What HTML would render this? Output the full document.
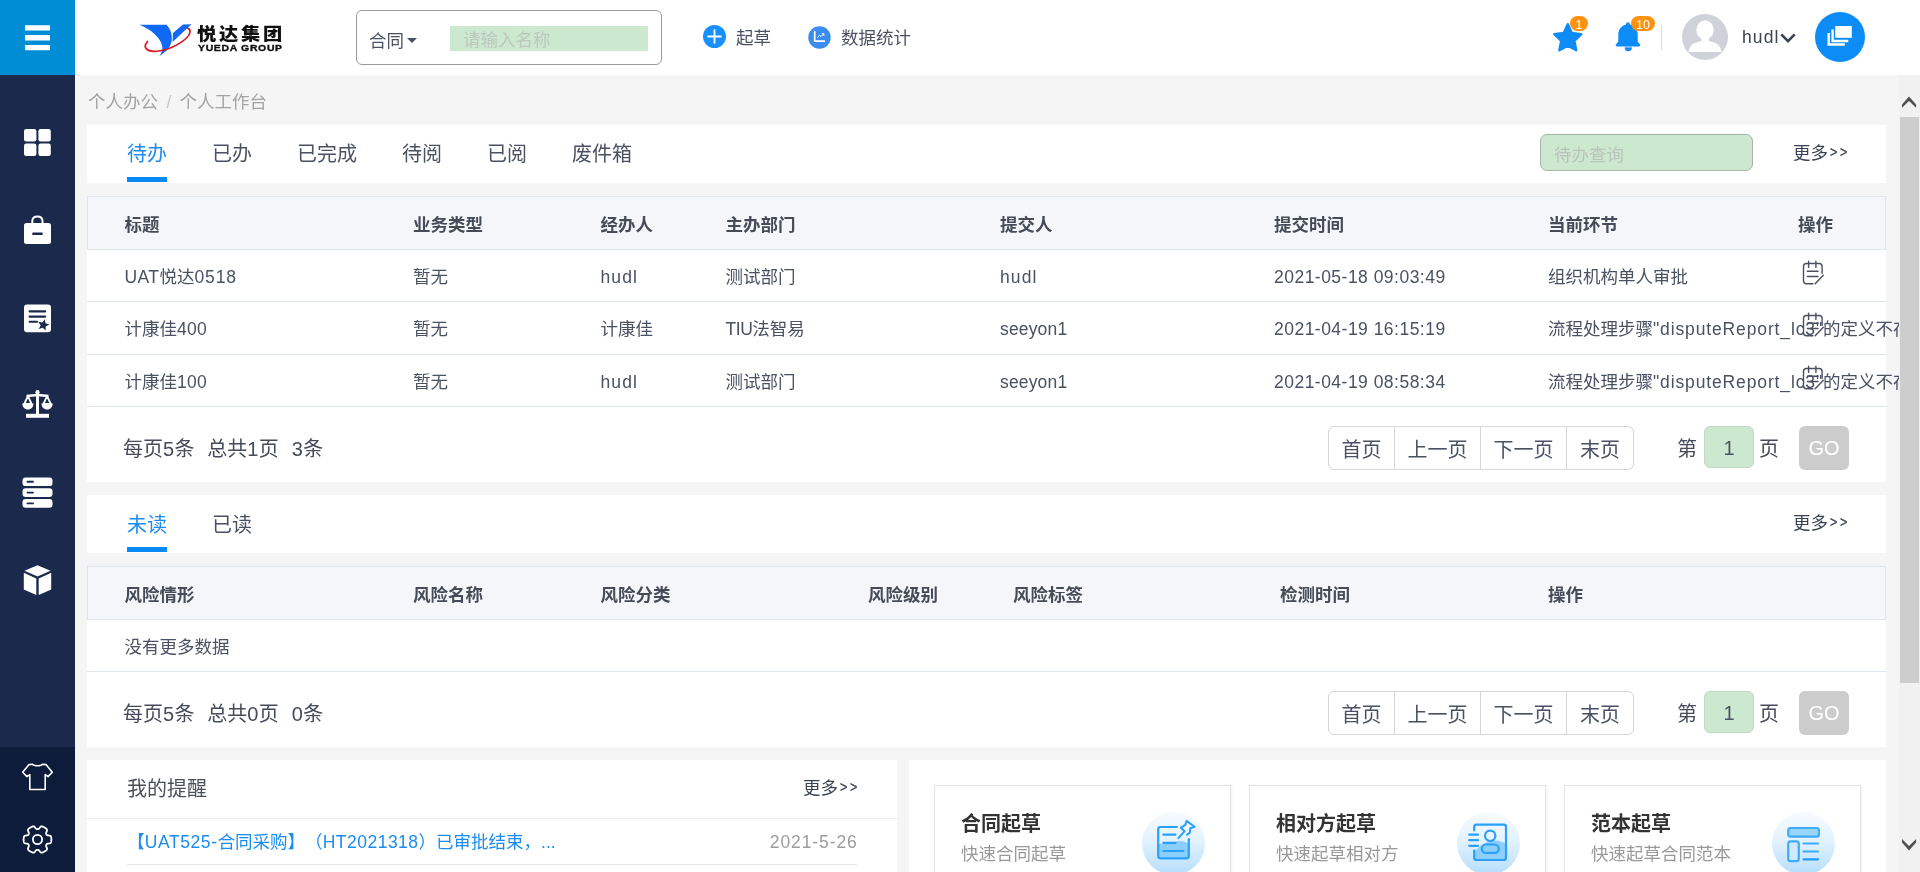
<!DOCTYPE html>
<html lang="zh-CN">
<head>
<meta charset="utf-8">
<title>个人工作台</title>
<style>
*{box-sizing:border-box;margin:0;padding:0}
html,body{width:1920px;height:872px;overflow:hidden;background:#f5f5f5}
body{position:relative;-webkit-font-smoothing:antialiased;text-spacing-trim:space-all;font-family:"Liberation Sans","Noto Sans CJK SC",sans-serif;font-size:17.5px;color:#4a5162}
.abs{position:absolute}
#hdr,#main,#side{will-change:transform}
/* sidebar */
#side{position:absolute;left:0;top:0;width:75px;height:872px;background:#1b294d}
#side .top{position:absolute;left:0;top:0;width:75px;height:75px;background:#008dd6}
#side .bot{position:absolute;left:0;top:747px;width:75px;height:125px;background:#0e1c3b}
#side svg{position:absolute}
/* header */
#hdr{position:absolute;left:75px;top:0;width:1845px;height:75px;background:#fff}
/* scrollbar */
#sb{position:absolute;left:1899px;top:75px;width:21px;height:797px;background:#f1f1f1}
#sb .thumb{position:absolute;left:1px;top:42px;width:19px;height:566px;background:#cdcdcd}
/* panels */
.panel{position:absolute;background:#fff}
.tab{position:absolute;font-size:20px;line-height:28px;color:#4a5162;white-space:nowrap}
.tab.on{color:#1a8cf3}
.uline{position:absolute;height:5px;background:#048af8}
.thead{position:absolute;left:87px;width:1799px;height:54px;background:#f5f6fa;border:1px solid #dfe5ec}
.th{position:absolute;font-weight:bold;font-size:17.5px;line-height:24px;color:#454b57;white-space:nowrap}
.td{position:absolute;font-size:17.5px;line-height:24px;color:#4a5162;white-space:nowrap}
.hl{position:absolute;left:87px;width:1799px;height:1px;background:#dfe5ec}
.pg{position:absolute;margin-top:2px;font-size:20px;line-height:28px;color:#454b5a;white-space:nowrap}
.btns{position:absolute;left:1328px;width:306px;height:44px;border:1px solid #d4d6d9;border-radius:6px;background:#fff}
.btns span{position:absolute;top:0;height:42px;line-height:46px;font-size:20px;color:#4a5162;text-align:center;border-left:1px solid #d4d6d9}
.btns span:first-child{border-left:0}
.pin{position:absolute;left:1704px;width:50px;height:42px;background:#cce8cf;border:1px solid #c4d6c6;border-radius:6px;text-align:center;font-size:20px;line-height:42px;color:#4a5162}
.go{position:absolute;left:1799px;width:50px;height:44px;background:#ccc;border-radius:6px;color:#fff;font-size:20px;line-height:44px;text-align:center}
.more{position:absolute;font-size:17.5px;line-height:24px;color:#3b4254;white-space:nowrap}
.gg{display:inline-block;position:relative;top:-0.6px;transform:scale(.72,.88);transform-origin:0 50%;letter-spacing:3.7px;margin-left:1.5px;-webkit-text-stroke:0.35px #3b4254}
.card{position:absolute;top:785px;width:297px;height:120px;border:1px solid #e3e3e3;background:#fff;box-shadow:1px 0 2px rgba(0,0,0,.05)}
.card b{position:absolute;left:26px;top:24px;font-size:20px;line-height:28px;color:#333;white-space:nowrap}
.card i{position:absolute;left:26px;top:55.5px;font-style:normal;font-size:17.5px;line-height:24px;color:#999;white-space:nowrap}
.card .circ{position:absolute;left:207px;top:25.800px;width:63px;height:63px;border-radius:50%;background:linear-gradient(#f7fbff 0%,#e3f2fe 45%,#b5defc 100%)}
</style>
</head>
<body>

<!-- HEADER -->
<div id="hdr">
  <!-- logo -->
  <svg class="abs" style="left:62px;top:20.500px" width="56" height="38" viewBox="0 0 56 38">
    <path d="M2.500 3.800 L29.500 3.800 C33.500 8 35.800 14 34.500 20.500 C33.500 24.500 32 27 30 29.200 L22.300 35.200 C25.300 31 26 27.500 25 24 C23 17 14.500 8.500 2.500 3.800 Z" fill="#1069f5"/>
    <path d="M46 3.5 L54.5 3.2 L35.5 21 L36 12 Z" fill="#1069f5"/>
    <path d="M10.5 20.5 C5 27 10 31.5 22 30 C36 28 52 18 53 11 C53.3 8.5 52 7.5 50.5 7" fill="none" stroke="#e0151f" stroke-width="1.7" stroke-linecap="round"/>
  </svg>
  <div class="abs" style="left:121.500px;top:22px;font-weight:900;font-size:17.5px;line-height:24px;color:#111;white-space:nowrap;letter-spacing:2.5px;transform:scaleX(1.1);transform-origin:0 0">悦达集团</div>
  <div class="abs" style="left:122.500px;top:43.300px;font-weight:bold;font-size:8.800px;line-height:11px;color:#111;white-space:nowrap;letter-spacing:0.55px;-webkit-text-stroke:0.35px #111;transform:scaleX(1.19);transform-origin:0 0">YUEDA GROUP</div>
  <!-- search -->
  <div class="abs" style="left:281px;top:10px;width:306px;height:55px;border:1px solid #9a9a9a;border-radius:6px;background:#fff"></div>
  <div class="abs" style="left:294px;top:28.700px;font-size:17.5px;line-height:24px;color:#4a5162">合同</div>
  <div class="abs" style="left:332px;top:38px;width:0;height:0;border-left:5px solid transparent;border-right:5px solid transparent;border-top:5px solid #4a5162"></div>
  <div class="abs" style="left:375px;top:26px;width:198px;height:25px;background:#cce8cf"></div>
  <div class="abs" style="left:388px;top:28px;font-size:17.5px;line-height:24px;color:#bcc8bf">请输入名称</div>
  <!-- draft -->
  <svg class="abs" style="left:628px;top:25px" width="23" height="23" viewBox="0 0 23 23"><circle cx="11.5" cy="11.5" r="11.5" fill="#1890ff"/><path d="M11.5 5.2V17.8M5.2 11.5H17.8" stroke="#fff" stroke-width="1.9" stroke-linecap="round"/></svg>
  <div class="abs" style="left:661px;top:26px;font-size:17.5px;line-height:24px;color:#4a5162">起草</div>
  <svg class="abs" style="left:733px;top:26px" width="23" height="23" viewBox="0 0 23 23"><circle cx="11.5" cy="11.5" r="11.2" fill="#3a8cee"/><path d="M6.7 5.5V15.2H16.3" stroke="#fff" stroke-width="1.7" fill="none" stroke-linejoin="round" stroke-linecap="round"/><path d="M9.5 11.6L11.6 9.3L13 10.6L15.6 8M13.8 7.7H15.9V9.8" stroke="#fff" stroke-width="1" fill="none"/></svg>
  <div class="abs" style="left:766px;top:26px;font-size:17.5px;line-height:24px;color:#4a5162">数据统计</div>
  <!-- star -->
  <svg class="abs" style="left:1476.200px;top:20.500px" width="34" height="32" viewBox="0 0 34 32"><path d="M16.8 3.2 L20.9 12 L30.3 13.2 L23.4 19.8 L25.2 29.3 L16.8 24.7 L8.4 29.3 L10.2 19.8 L3.3 13.2 L12.7 12 Z" fill="#0d8bf6" stroke="#0d8bf6" stroke-width="2.4" stroke-linejoin="round"/></svg>
  <div class="abs" style="left:1495px;top:16px;width:18px;height:15px;border-radius:8px;background:#ff9211;color:#fff;font-size:12.5px;line-height:18.500px;overflow:hidden;text-align:center">1</div>
  <!-- bell -->
  <svg class="abs" style="left:1539px;top:20px" width="30" height="34" viewBox="0 0 30 34"><path d="M14 2.200 c1.100 0 1.900 .8 1.900 1.900 v.3 C20.300 5.500 23.700 9.300 23.700 14.300 V20.500 C23.700 21.800 24.300 22.600 25.300 23.600 L25.900 24.300 C26.800 25.300 26.200 26.600 24.900 26.600 H3.100 C1.800 26.600 1.200 25.300 2.100 24.300 L2.700 23.600 C3.700 22.600 4.300 21.800 4.300 20.500 V14.300 C4.300 9.300 7.700 5.500 12.100 4.400 v-.3 c0-1.100 .8-1.900 1.900-1.900 Z" fill="#0d8bf6"/><rect x="10.700" y="26.600" width="7.200" height="1.600" fill="#63b5fa"/><path d="M10.700 28 H17.900 C17.900 30 16.200 31.300 14.300 31.300 C12.400 31.300 10.700 30 10.700 28 Z" fill="#0d8bf6"/></svg>
  <div class="abs" style="left:1556px;top:16px;width:24px;height:15px;border-radius:8px;background:#ff9211;color:#fff;font-size:12.5px;line-height:18.500px;overflow:hidden;text-align:center">10</div>
  <div class="abs" style="left:1586px;top:25px;width:1px;height:25px;background:#dcdcdc"></div>
  <!-- avatar -->
  <svg class="abs" style="left:1607px;top:14px" width="46" height="46" viewBox="0 0 46 46"><defs><clipPath id="avc"><circle cx="23" cy="23" r="23"/></clipPath></defs><circle cx="23" cy="23" r="23" fill="#cfd2d8"/><g clip-path="url(#avc)" fill="#fff"><ellipse cx="23" cy="16" rx="8.700" ry="9.700"/><path d="M19.200 22 H26.800 V27.200 C30 27.600 32.500 28.500 34.300 29.500 C37.500 31.200 38.800 34 39.600 38 H6.400 C7.200 34 8.500 31.200 11.700 29.500 C13.500 28.500 16 27.600 19.200 27.200 Z"/></g></svg>
  <div class="abs" style="left:1667px;top:23px;font-size:17.5px;line-height:28px;color:#3c4252;letter-spacing:1.1px">hudl</div>
  <svg class="abs" style="left:1705px;top:32px" width="16" height="12" viewBox="0 0 16 12"><path d="M1.300 2.300 L8 9.200 L14.700 2.300" fill="none" stroke="#3c4252" stroke-width="2.600"/></svg>
  <!-- blue circle -->
  <svg class="abs" style="left:1740px;top:12px" width="50" height="50" viewBox="0 0 50 50"><circle cx="25" cy="25" r="25" fill="#0b8cf7"/><path d="M13.700 20.900 V32.500 H29.800" fill="none" stroke="#fff" stroke-width="2.400"/><path d="M17.600 17.600 V29 H33.300" fill="none" stroke="#fff" stroke-width="2.400"/><rect x="20.200" y="14" width="16.600" height="11.800" fill="#fff"/></svg>
</div>

<!-- SIDEBAR -->
<div id="side">
  <div class="top"></div>
  <div class="bot"></div>
  <!-- hamburger -->
  <svg style="left:24px;top:24px" width="27" height="27" viewBox="0 0 27 27"><path d="M1 1.3h25v5.2H1zM1 11h25v5.4H1zM1 21h25v5.2H1z" fill="#fff"/></svg>
  <!-- grid -->
  <svg style="left:23px;top:128px" width="29" height="29" viewBox="0 0 29 29"><g fill="#fff"><rect x="1" y="1" width="12.4" height="12.4" rx="2.2"/><rect x="15.4" y="1" width="12.4" height="12.4" rx="2.2"/><rect x="1" y="15.6" width="12.4" height="12.4" rx="2.2"/><rect x="15.4" y="15.6" width="12.4" height="12.4" rx="2.2"/></g></svg>
  <!-- briefcase -->
  <svg style="left:22px;top:214px" width="31" height="32" viewBox="0 0 31 32"><path d="M10.3 9.5 V7.2 C10.3 4.3 12.4 2.6 15.4 2.6 C18.4 2.6 20.5 4.3 20.5 7.2 V9.5" fill="none" stroke="#fff" stroke-width="2"/><rect x="2" y="9" width="27" height="21" rx="2.5" fill="#fff"/><rect x="10.2" y="18.4" width="10.6" height="2.6" rx="1" fill="#1b294d"/></svg>
  <!-- certificate -->
  <svg style="left:22px;top:302.500px" width="31" height="31" viewBox="0 0 31 31"><rect x="2" y="1.6" width="27" height="27.6" rx="3" fill="#fff"/><g stroke="#1b294d" stroke-width="2.1" stroke-linecap="round"><path d="M7.6 8.4H23.2M7.6 13.6H23.2M7.6 18.8H15"/></g><path transform="rotate(14 21.5 21.5)" d="M21.5 16 L23.100 19.800 L27.200 20.200 L24.100 22.900 L25 26.900 L21.500 24.800 L18 26.900 L18.900 22.900 L15.800 20.200 L19.900 19.800 Z" fill="#1b294d"/></svg>
  <!-- scale -->
  <svg style="left:21px;top:389px" width="33" height="32" viewBox="0 0 33 32"><g fill="none" stroke="#fff" stroke-linejoin="round"><path d="M16.500 2.500V26" stroke-width="3"/><path d="M5 26.800H28" stroke-width="4"/><path d="M5.500 7 C10 6.800 13 6 16.500 6 C20 6 23 6.800 27.500 7" stroke-width="2.400"/><path d="M6.900 7.200 L3.200 15 H10.600 Z" stroke-width="1.800"/><path d="M26.100 7.200 L22.400 15 H29.800 Z" stroke-width="1.800"/></g><path d="M1.300 14.600 H12.500 C12.500 18 10.200 20.600 6.900 20.600 C3.600 20.600 1.300 18 1.300 14.600 Z" fill="#fff"/><path d="M20.500 14.600 H31.700 C31.700 18 29.400 20.600 26.100 20.600 C22.800 20.600 20.500 18 20.500 14.600 Z" fill="#fff"/><circle cx="16.500" cy="3.200" r="2.100" fill="#fff"/></svg>
  <!-- server -->
  <svg style="left:21px;top:476px" width="33" height="33" viewBox="0 0 33 33"><g fill="#fff"><rect x="1.500" y="1.500" width="30" height="8.600" rx="3.200"/><rect x="1.500" y="12.300" width="30" height="8.600" rx="3.200"/><rect x="1.500" y="23.100" width="30" height="8.600" rx="3.200"/></g><g stroke="#1b294d" stroke-width="1.900" stroke-linecap="round"><path d="M6.500 5.800H12M6.500 16.600H12M6.500 27.400H12"/></g></svg>
  <!-- cube -->
  <svg style="left:22px;top:564px" width="31" height="32" viewBox="0 0 31 32"><path d="M15.500 1.200 L28.500 6.700 L15.500 12.600 L2.500 6.700 Z" fill="#fff"/><path d="M1.800 8.800 L14.300 14.600 V31 L1.800 25.600 Z" fill="#fff"/><path d="M29.200 8.800 L16.700 14.600 V31 L29.200 25.600 Z" fill="#fff"/></svg>
  <!-- tshirt -->
  <svg style="left:21px;top:762px" width="33" height="30" viewBox="0 0 33 30"><path d="M11.500 2.300 C13 4.300 20 4.300 21.500 2.300 L25 2.600 L31.300 10.300 L27 14.600 L24.200 12.600 V27.500 H8.800 V12.600 L6 14.600 L1.700 10.300 L8 2.600 Z" fill="none" stroke="#fff" stroke-width="1.600" stroke-linejoin="round"/></svg>
  <!-- gear -->
  <svg style="left:20.800px;top:823.300px" width="33" height="33" viewBox="0 0 33 33"><circle cx="16.500" cy="16.500" r="4.600" fill="none" stroke="#fff" stroke-width="1.800"/><path d="M30.40 16.50 L30.39 16.01 L30.36 15.53 L30.32 15.05 L30.25 14.57 L30.15 14.09 L30.00 13.63 L29.75 13.20 L29.27 12.84 L28.49 12.61 L27.53 12.48 L26.74 12.36 L26.21 12.18 L25.86 11.93 L25.62 11.65 L25.42 11.35 L25.26 11.03 L25.14 10.67 L25.10 10.25 L25.20 9.70 L25.50 8.95 L25.87 8.07 L26.06 7.27 L25.98 6.68 L25.74 6.24 L25.41 5.88 L25.05 5.56 L24.67 5.26 L24.27 4.98 L23.87 4.71 L23.45 4.46 L23.03 4.23 L22.59 4.01 L22.15 3.81 L21.70 3.63 L21.24 3.47 L20.77 3.37 L20.26 3.38 L19.71 3.61 L19.12 4.17 L18.54 4.94 L18.04 5.57 L17.61 5.93 L17.23 6.11 L16.86 6.18 L16.50 6.20 L16.14 6.18 L15.77 6.11 L15.39 5.93 L14.96 5.57 L14.46 4.94 L13.88 4.17 L13.29 3.61 L12.74 3.38 L12.23 3.37 L11.76 3.47 L11.30 3.63 L10.85 3.81 L10.41 4.01 L9.97 4.23 L9.55 4.46 L9.13 4.71 L8.73 4.98 L8.33 5.26 L7.95 5.56 L7.59 5.88 L7.26 6.24 L7.02 6.68 L6.94 7.27 L7.13 8.07 L7.50 8.95 L7.80 9.70 L7.90 10.25 L7.86 10.67 L7.74 11.03 L7.58 11.35 L7.38 11.65 L7.14 11.93 L6.79 12.18 L6.26 12.36 L5.47 12.48 L4.51 12.61 L3.73 12.84 L3.25 13.20 L3.00 13.63 L2.85 14.09 L2.75 14.57 L2.68 15.05 L2.64 15.53 L2.61 16.01 L2.60 16.50 L2.61 16.99 L2.64 17.47 L2.68 17.95 L2.75 18.43 L2.85 18.91 L3.00 19.37 L3.25 19.80 L3.73 20.16 L4.51 20.39 L5.47 20.52 L6.26 20.64 L6.79 20.82 L7.14 21.07 L7.38 21.35 L7.58 21.65 L7.74 21.97 L7.86 22.33 L7.90 22.75 L7.80 23.30 L7.50 24.05 L7.13 24.93 L6.94 25.73 L7.02 26.32 L7.26 26.76 L7.59 27.12 L7.95 27.44 L8.33 27.74 L8.73 28.02 L9.13 28.29 L9.55 28.54 L9.97 28.77 L10.41 28.99 L10.85 29.19 L11.30 29.37 L11.76 29.53 L12.23 29.63 L12.74 29.62 L13.29 29.39 L13.88 28.83 L14.46 28.06 L14.96 27.43 L15.39 27.07 L15.77 26.89 L16.14 26.82 L16.50 26.80 L16.86 26.82 L17.23 26.89 L17.61 27.07 L18.04 27.43 L18.54 28.06 L19.12 28.83 L19.71 29.39 L20.26 29.62 L20.77 29.63 L21.24 29.53 L21.70 29.37 L22.15 29.19 L22.59 28.99 L23.03 28.77 L23.45 28.54 L23.87 28.29 L24.27 28.02 L24.67 27.74 L25.05 27.44 L25.41 27.12 L25.74 26.76 L25.98 26.32 L26.06 25.73 L25.87 24.93 L25.50 24.05 L25.20 23.30 L25.10 22.75 L25.14 22.33 L25.26 21.97 L25.42 21.65 L25.62 21.35 L25.86 21.07 L26.21 20.82 L26.74 20.64 L27.53 20.52 L28.49 20.39 L29.27 20.16 L29.75 19.80 L30.00 19.37 L30.15 18.91 L30.25 18.43 L30.32 17.95 L30.36 17.47 L30.39 16.99 Z" fill="none" stroke="#fff" stroke-width="1.800" stroke-linejoin="round"/></svg>
</div>

<!-- MAIN -->
<div id="main">
  <div class="abs" style="left:88px;top:90px;font-size:17.5px;line-height:24px;color:#a3a3a3;white-space:nowrap">个人办公 <span style="color:#c8c8c8;margin:0 3.5px">/</span> 个人工作台</div>
  <div class="panel" style="left:87px;top:125px;width:1799px;height:58px"></div>
  <div class="tab on" style="left:127px;top:140px">待办</div>
  <div class="tab" style="left:212px;top:140px">已办</div>
  <div class="tab" style="left:297px;top:140px">已完成</div>
  <div class="tab" style="left:402px;top:140px">待阅</div>
  <div class="tab" style="left:487px;top:140px">已阅</div>
  <div class="tab" style="left:572px;top:140px">废件箱</div>
  <div class="uline" style="left:127px;top:177px;width:40px"></div>
  <div class="abs" style="left:1540px;top:134px;width:213px;height:37px;background:#cce8cf;border:1px solid #a9b3aa;border-radius:7px"></div>
  <div class="abs" style="left:1554px;top:143px;font-size:17.5px;line-height:24px;color:#b9c5bc">待办查询</div>
  <div class="more" style="left:1793px;top:141px">更多<span class="gg">&gt;&gt;</span></div>
  <div class="panel" style="left:87px;top:196px;width:1799px;height:286px"></div>
  <div class="thead" style="top:196px"></div>
  <div class="th" style="left:124.5px;top:213px">标题</div>
  <div class="th" style="left:413px;top:213px">业务类型</div>
  <div class="th" style="left:600.5px;top:213px">经办人</div>
  <div class="th" style="left:725.5px;top:213px">主办部门</div>
  <div class="th" style="left:1000px;top:213px">提交人</div>
  <div class="th" style="left:1274px;top:213px">提交时间</div>
  <div class="th" style="left:1548px;top:213px">当前环节</div>
  <div class="th" style="left:1798px;top:213px">操作</div>
  <div class="td" style="left:124.5px;top:265px"><span style="letter-spacing:0.4px">UAT</span>悦达<span style="letter-spacing:0.9px">0518</span></div>
  <div class="td" style="left:413px;top:265px">暂无</div>
  <div class="td" style="left:600.5px;top:265px"><span style="letter-spacing:1.1px">hudl</span></div>
  <div class="td" style="left:725.5px;top:265px">测试部门</div>
  <div class="td" style="left:1000px;top:265px"><span style="letter-spacing:1.1px">hudl</span></div>
  <div class="td" style="left:1274px;top:265px"><span style="letter-spacing:0.48px">2021-05-18 09:03:49</span></div>
  <div class="td" style="left:1548px;top:265px">组织机构单人审批</div>
  <svg class="abs" style="left:1801px;top:260px" width="24" height="26" viewBox="0 0 24 26"><g fill="none" stroke="#4a5060" stroke-width="1.400" stroke-linecap="round" stroke-linejoin="round"><path d="M21.100 13.300 V6.500 C21.100 4.800 19.800 3.500 18.100 3.500 H5.500 C3.800 3.500 2.500 4.800 2.500 6.500 V20.700 C2.500 22.400 3.800 23.700 5.500 23.700 H11.900"/><path d="M7.600 1.200V7.400M14.900 1.200V7.400"/><path d="M6.400 11.300H17M6.400 16.500H17"/><path d="M22.300 15.200 L14.200 23.700"/></g></svg>
  <div class="hl" style="top:301px"></div>
  <div class="td" style="left:124.5px;top:317px">计康佳<span style="letter-spacing:0.3px">400</span></div>
  <div class="td" style="left:413px;top:317px">暂无</div>
  <div class="td" style="left:600.5px;top:317px">计康佳</div>
  <div class="td" style="left:725.5px;top:317px"><span style="letter-spacing:-0.45px">TIU</span>法智易</div>
  <div class="td" style="left:1000px;top:317px"><span style="letter-spacing:0.16px">seeyon1</span></div>
  <div class="td" style="left:1274px;top:317px"><span style="letter-spacing:0.48px">2021-04-19 16:15:19</span></div>
  <div class="td" style="left:1548px;top:317px">流程处理步骤<span style="letter-spacing:0.87px">&quot;disputeReport_lc3&quot;</span>的定义不存在</div>
  <svg class="abs" style="left:1801px;top:312px" width="24" height="26" viewBox="0 0 24 26"><g fill="none" stroke="#4a5060" stroke-width="1.400" stroke-linecap="round" stroke-linejoin="round"><path d="M21.100 13.300 V6.500 C21.100 4.800 19.800 3.500 18.100 3.500 H5.500 C3.800 3.500 2.500 4.800 2.500 6.500 V20.700 C2.500 22.400 3.800 23.700 5.500 23.700 H11.900"/><path d="M7.600 1.200V7.400M14.900 1.200V7.400"/><path d="M6.400 11.300H17M6.400 16.500H17"/><path d="M22.300 15.200 L14.200 23.700"/></g></svg>
  <div class="hl" style="top:354px"></div>
  <div class="td" style="left:124.5px;top:370px">计康佳<span style="letter-spacing:0.3px">100</span></div>
  <div class="td" style="left:413px;top:370px">暂无</div>
  <div class="td" style="left:600.5px;top:370px"><span style="letter-spacing:1.1px">hudl</span></div>
  <div class="td" style="left:725.5px;top:370px">测试部门</div>
  <div class="td" style="left:1000px;top:370px"><span style="letter-spacing:0.16px">seeyon1</span></div>
  <div class="td" style="left:1274px;top:370px"><span style="letter-spacing:0.48px">2021-04-19 08:58:34</span></div>
  <div class="td" style="left:1548px;top:370px">流程处理步骤<span style="letter-spacing:0.87px">&quot;disputeReport_lc3&quot;</span>的定义不存在</div>
  <svg class="abs" style="left:1801px;top:365px" width="24" height="26" viewBox="0 0 24 26"><g fill="none" stroke="#4a5060" stroke-width="1.400" stroke-linecap="round" stroke-linejoin="round"><path d="M21.100 13.300 V6.500 C21.100 4.800 19.800 3.500 18.100 3.500 H5.500 C3.800 3.500 2.500 4.800 2.500 6.500 V20.700 C2.500 22.400 3.800 23.700 5.500 23.700 H11.900"/><path d="M7.600 1.200V7.400M14.900 1.200V7.400"/><path d="M6.400 11.300H17M6.400 16.500H17"/><path d="M22.300 15.200 L14.200 23.700"/></g></svg>
  <div class="hl" style="top:406px"></div>
  <div class="pg" style="left:123px;top:433px">每页<span style="letter-spacing:0.4px">5</span>条<span style="margin-left:12.8px">总共<span style="letter-spacing:0.4px">1</span>页</span><span style="margin-left:12.8px"><span style="letter-spacing:0.4px">3</span>条</span></div>
  <div class="btns" style="top:426px"><span style="left:0;width:65px">首页</span><span style="left:65px;width:86px">上一页</span><span style="left:151px;width:86px">下一页</span><span style="left:237px;width:67px">末页</span></div>
  <div class="pg" style="left:1677px;top:433px">第</div>
  <div class="pin" style="top:426px">1</div>
  <div class="pg" style="left:1759px;top:433px">页</div>
  <div class="go" style="top:426px">GO</div>
  <div class="panel" style="left:87px;top:495px;width:1799px;height:58px"></div>
  <div class="tab on" style="left:127px;top:511px">未读</div>
  <div class="tab" style="left:212px;top:511px">已读</div>
  <div class="uline" style="left:127px;top:547px;width:40px"></div>
  <div class="more" style="left:1793px;top:511px">更多<span class="gg">&gt;&gt;</span></div>
  <div class="panel" style="left:87px;top:566px;width:1799px;height:181px"></div>
  <div class="thead" style="top:566px"></div>
  <div class="th" style="left:124.5px;top:583px">风险情形</div>
  <div class="th" style="left:413px;top:583px">风险名称</div>
  <div class="th" style="left:600.5px;top:583px">风险分类</div>
  <div class="th" style="left:868px;top:583px">风险级别</div>
  <div class="th" style="left:1013px;top:583px">风险标签</div>
  <div class="th" style="left:1280px;top:583px">检测时间</div>
  <div class="th" style="left:1548px;top:583px">操作</div>
  <div class="td" style="left:124.5px;top:635px">没有更多数据</div>
  <div class="hl" style="top:671px"></div>
  <div class="pg" style="left:123px;top:698px">每页<span style="letter-spacing:0.4px">5</span>条<span style="margin-left:12.8px">总共<span style="letter-spacing:0.4px">0</span>页</span><span style="margin-left:12.8px"><span style="letter-spacing:0.4px">0</span>条</span></div>
  <div class="btns" style="top:691px"><span style="left:0;width:65px">首页</span><span style="left:65px;width:86px">上一页</span><span style="left:151px;width:86px">下一页</span><span style="left:237px;width:67px">末页</span></div>
  <div class="pg" style="left:1677px;top:698px">第</div>
  <div class="pin" style="top:691px">1</div>
  <div class="pg" style="left:1759px;top:698px">页</div>
  <div class="go" style="top:691px">GO</div>
  <div class="panel" style="left:87px;top:760px;width:810px;height:112px"></div>
  <div class="abs" style="left:127px;top:774.5px;font-size:20px;line-height:28px;color:#4a4f5a;white-space:nowrap">我的提醒</div>
  <div class="more" style="left:803px;top:776px">更多<span class="gg">&gt;&gt;</span></div>
  <div class="abs" style="left:87px;top:818px;width:810px;height:1px;background:#ebeef3"></div>
  <div class="abs" style="left:127.2px;top:830px;font-size:17.5px;line-height:24px;color:#1a8cf3;white-space:nowrap">【<span style="letter-spacing:0.6px">UAT525-</span>合同采购】（<span style="letter-spacing:0.5px">HT2021318</span>）已审批结束，...</div>
  <div class="abs" style="left:769.8px;top:830px;font-size:17.5px;line-height:24px;color:#9c9c9c;white-space:nowrap;letter-spacing:0.9px">2021-5-26</div>
  <div class="abs" style="left:127px;top:864px;width:730px;height:1px;background:#e4e7ed"></div>
  <div class="panel" style="left:909px;top:760px;width:977px;height:112px"></div>
  <div class="card" style="left:934px"><b>合同起草</b><i>快速合同起草</i><div class="circ"><svg class="abs" style="left:0;top:0" width="63" height="63" viewBox="0 0 63 63"><path d="M16.200 32 C21 31.500 27 32.500 31 30.500 C35 28.300 41 28.300 46.500 31.500 V46 H16.200 Z" fill="#8dcffc"/><g fill="none" stroke="#2aa0fb" stroke-width="2.200" stroke-linecap="round" stroke-linejoin="round"><path d="M34.800 15 H18.500 C17.200 15 16.200 16 16.200 17.300 V44 C16.200 45.300 17.200 46.300 18.500 46.300 H44.500 C45.800 46.300 46.800 45.300 46.800 44 V27"/><path d="M21.300 22.600H33.500M21.300 30.800H33.500M21.300 39H41.300"/><path d="M38.900 15.700 L43.300 12.900 L44.600 8.900 L52.500 14.800 L48.300 16.200 L47.900 20.600 L45 22.800" stroke-width="2"/><path d="M38.900 15.700 L42.600 19.200 L36.400 26.200" stroke-width="2"/></g></svg></div></div>
  <div class="card" style="left:1249px"><b>相对方起草</b><i>快速起草相对方</i><div class="circ"><svg class="abs" style="left:0;top:0" width="63" height="63" viewBox="0 0 63 63"><path d="M17.500 40 C22 34 30 28.500 38 28.500 C42 28.500 45.500 30 48.500 32 V47.500 H17.500 Z" fill="#8dcffc"/><g fill="none" stroke="#2aa0fb" stroke-width="2.200" stroke-linecap="round" stroke-linejoin="round"><path d="M17.200 18.500 V15 C17.200 13.700 18.200 12.700 19.500 12.700 H46.700 C48 12.700 49 13.700 49 15 V45.700 C49 47 48 48 46.700 48 H19.500 C18.200 48 17.200 47 17.200 45.700 V38.500"/><path d="M12.200 22.700H21M12.200 28.200H21M12.200 33.800H21"/><circle cx="33.200" cy="23.800" r="5.200"/><rect x="24.800" y="32.500" width="17" height="8.400" rx="4.200"/></g></svg></div></div>
  <div class="card" style="left:1564px"><b>范本起草</b><i>快速起草合同范本</i><div class="circ"><svg class="abs" style="left:0;top:0" width="63" height="63" viewBox="0 0 63 63"><g fill="none" stroke="#3fabfc" stroke-width="2.200" stroke-linecap="round" stroke-linejoin="round"><rect x="16.200" y="16" width="30.800" height="8.600" rx="2.400" fill="#98d5fb"/><rect x="16.200" y="29.300" width="10.600" height="19.800" rx="2.400" fill="#cfeafe"/><path d="M31.500 31.500H46M31.500 39.500H46"/><path d="M31.500 47.300H46" stroke="#1e9bfa"/></g></svg></div></div>
  </div>

<!-- SCROLLBAR -->
<div id="sb"><div class="thumb"></div>
  <svg class="abs" style="left:0;top:18px" width="21" height="18" viewBox="0 0 21 18"><path d="M3 11.500 L10 3.500 L17.100 11.500 V14.800 L10 8 L3 14.800 Z" fill="#505050"/></svg>
  <svg class="abs" style="left:0;top:761px" width="21" height="18" viewBox="0 0 21 18"><path d="M3 6.400 L10 14.500 L17.100 6.400 V3.100 L10 10 L3 3.100 Z" fill="#505050"/></svg>
</div>

</body>
</html>
